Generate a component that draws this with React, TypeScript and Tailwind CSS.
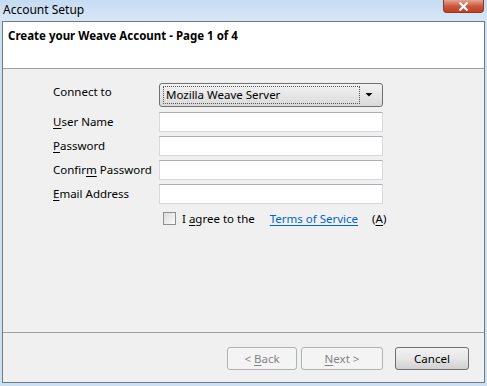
import React from "react";

const font = { fontFamily: '"Noto Sans", "Liberation Sans", sans-serif' };

const Field = () => (
	<div className="h-[20px] w-[224px] bg-white border border-[#d5d9de] border-t-[#abadb3]" />
);

const Label = ({ pre, u, post }: { pre?: string; u: string; post: string }) => (
	<div className="h-[20px] flex items-center text-[11.5px] text-black leading-none">
		<span className="whitespace-pre">
			{pre}
			<span className="underline underline-offset-2">{u}</span>
			{post}
		</span>
	</div>
);

export default function App() {
	return (
		<div className="w-[487px] h-[386px] bg-[#cddff3] flex flex-col" style={font}>
			{/* Title bar */}
			<div className="h-[21px] flex items-start justify-between bg-gradient-to-b from-[#c4dbf2] to-[#d9e7f6]">
				<div className="pl-[3px] pt-[2px] text-[12px] leading-[16px] text-black">Account Setup</div>
				<div className="mr-[3px] w-[41px] h-[13px] rounded-b-[4px] border border-t-0 border-[#8a3a2d] bg-gradient-to-b from-[#e3a595] via-[#cb5a40] to-[#c33b1c] flex items-center justify-center">
					<svg width="11" height="9" viewBox="0 0 11 9">
						<path d="M1.5 0.5 L9.5 8.5 M9.5 0.5 L1.5 8.5" stroke="#fff" strokeWidth="2.2" />
					</svg>
				</div>
			</div>

			{/* Client area */}
			<div className="ml-[2px] mr-[2px] mb-[3px] flex-1 border border-[#6f7a86] bg-[#f0f0f0] flex flex-col">
				<div className="h-[47px] bg-white border-b border-[#a0a0a0] pl-[5px] pt-[6px]">
					<div className="text-[11.5px] font-bold leading-[16px] text-black">
						Create your Weave Account - Page 1 of 4
					</div>
				</div>

				<div className="flex-1 pl-[50px] pt-[14px]">
					<div className="grid grid-cols-[106px_224px] gap-y-[4px]">
						<div className="text-[11.5px] leading-[16px] pt-[1px] text-black">Connect to</div>
						<div className="h-[24px] mb-[1px] rounded-[3px] border border-[#707070] bg-gradient-to-b from-[#f3f3f3] to-[#dadada] flex items-center pl-[3px] pr-[6px]">
							<div className="flex-1 h-[18px] border border-dotted border-[#555] flex items-center pl-[2px] text-[11.5px] text-black leading-none">
								Mozilla Weave Server
							</div>
							<svg width="14" height="8" viewBox="0 0 14 8" className="ml-[2px]">
								<path d="M3.5 2 L10.5 2 L7 5.5 Z" fill="#000" />
							</svg>
						</div>

						<Label u="U" post="ser Name" />
						<Field />
						<Label u="P" post="assword" />
						<Field />
						<Label pre="Confir" u="m" post=" Password" />
						<Field />
						<Label u="E" post="mail Address" />
						<Field />
					</div>

					<div className="flex items-center mt-[8px] ml-[110px] text-[11.5px] text-black leading-none">
						<div className="w-[13px] h-[13px] border border-[#8f8f8f] bg-gradient-to-br from-[#dcdcdc] to-[#fbfbfb] mr-[6px]" />
						<span className="whitespace-pre">
							I <span className="underline underline-offset-2">a</span>gree to the
						</span>
						<span className="ml-[15px] text-[#0066cc] underline underline-offset-2">Terms of Service</span>
						<span className="ml-[14px]">
							(<span className="underline underline-offset-2">A</span>)
						</span>
					</div>
				</div>

				<div className="h-[50px] border-t border-[#a0a0a0] flex items-start justify-end pt-[14px] pr-[15px]">
					<div className="w-[70px] h-[23px] border border-[#adb2b5] rounded-[3px] bg-[#f4f4f4] flex items-center justify-center text-[11.5px] text-[#838383] leading-none">
						<span className="whitespace-pre">
							&lt; <span className="underline underline-offset-2">B</span>ack
						</span>
					</div>
					<div className="ml-[4px] w-[82px] h-[23px] border border-[#adb2b5] rounded-[3px] bg-[#f4f4f4] flex items-center justify-center text-[11.5px] text-[#838383] leading-none">
						<span className="whitespace-pre">
							<span className="underline underline-offset-2">N</span>ext &gt;
						</span>
					</div>
					<div className="ml-[12px] w-[74px] h-[23px] border border-[#707070] rounded-[3px] bg-gradient-to-b from-[#f2f2f2] via-[#e6e6e6] to-[#d0d0d0] flex items-center justify-center text-[11.5px] text-black leading-none">
						Cancel
					</div>
				</div>
			</div>
		</div>
	);
}
